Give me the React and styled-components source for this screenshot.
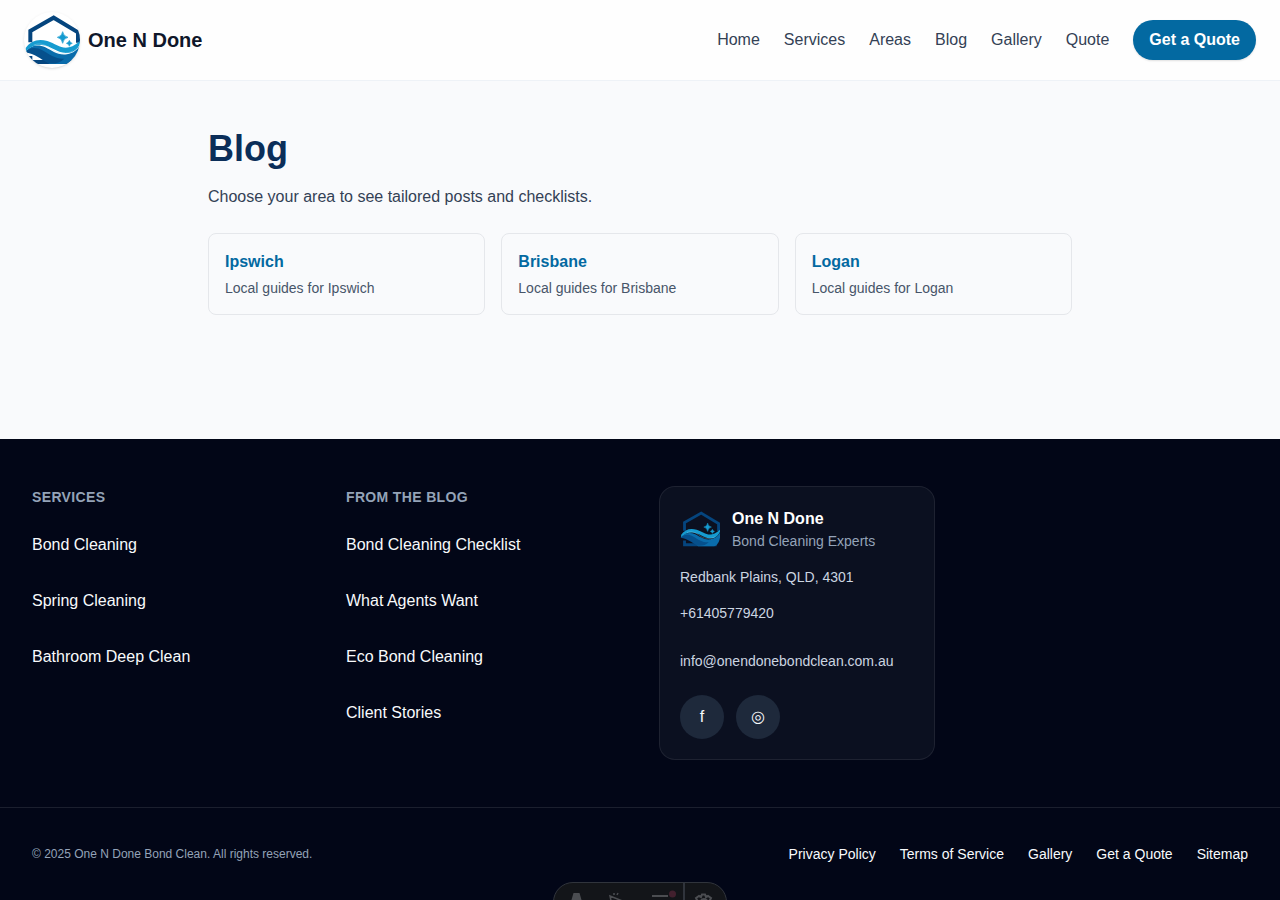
import React from "react";
import styled, { createGlobalStyle } from "styled-components";

const GlobalStyle = createGlobalStyle`
  *, *::before, *::after { box-sizing: border-box; }
  html, body { margin: 0; height: 900px; overflow: hidden; }
  body {
    background: #f9fafc;
    color: #334155;
    font-family: "Liberation Sans", Arial, sans-serif;
    font-size: 16px;
    line-height: 24px;
  }
  a { color: inherit; text-decoration: none; }
  h1, h2, p, ul { margin: 0; padding: 0; }
  ul { list-style: none; }
`;

const Page = styled.div`
  height: 900px;
  overflow: hidden;
  position: relative;
`;

const Header = styled.header`
  display: flex;
  align-items: center;
  justify-content: space-between;
  height: 81px;
  padding: 0 24px;
  background: #fefefe;
  border-bottom: 1px solid #eef2f7;
`;

const Brand = styled.a`
  display: flex;
  align-items: center;
  gap: 8px;
  color: #0f172a;
  font-size: 20px;
  font-weight: 700;
`;

const LogoDisc = styled.span`
  display: flex;
  width: 56px;
  height: 56px;
  border-radius: 50%;
  overflow: hidden;
  background: #fff;
  box-shadow: 0 1px 3px rgba(0, 0, 0, 0.1), 0 1px 2px -1px rgba(0, 0, 0, 0.1);
`;

const Nav = styled.nav`
  display: flex;
  align-items: center;
  gap: 24px;
`;

const QuoteButton = styled.a`
  padding: 8px 16px;
  border-radius: 999px;
  background: #0369a1;
  color: #fff;
  font-weight: 700;
  box-shadow: 0 1px 2px rgba(0, 0, 0, 0.12);
`;

const Main = styled.main`
  width: 864px;
  height: 358px;
  margin: 0 auto;
  padding-top: 48px;
`;

const Title = styled.h1`
  color: #0b2e59;
  font-size: 36px;
  line-height: 40px;
`;

const Intro = styled.p`
  margin: 16px 0 24px;
`;

const AreaGrid = styled.div`
  display: grid;
  grid-template-columns: repeat(3, 1fr);
  gap: 16px;
`;

const AreaCard = styled.a`
  height: 82px;
  padding: 16px;
  border: 1px solid #e5e7eb;
  border-radius: 8px;
`;

const AreaName = styled.h2`
  color: #0369a1;
  font-size: 16px;
  line-height: 24px;
`;

const AreaText = styled.p`
  margin-top: 4px;
  color: #475569;
  font-size: 14px;
  line-height: 20px;
`;

const Footer = styled.footer`
  height: 461px;
  background: #020617;
  color: #f8fafc;
`;

const FooterGrid = styled.div`
  display: grid;
  grid-template-columns: 276px 275px 276px 1fr;
  gap: 38px;
  height: 368px;
  padding: 47px 32px;
`;

const ColumnTitle = styled.h2`
  margin: 1px 0 16px;
  color: #94a3b8;
  font-size: 14px;
  line-height: 20px;
  letter-spacing: 0.35px;
  text-transform: uppercase;
`;

const LinkList = styled.ul`
  display: grid;
  gap: 12px;
`;

const LinkItem = styled.li`
  display: flex;
  align-items: center;
  height: 44px;
`;

const ContactCard = styled.section`
  height: 274px;
  padding: 20px;
  border: 1px solid rgba(255, 255, 255, 0.08);
  border-radius: 16px;
  background: #0b1020;
  color: #cbd5e1;
  font-size: 14px;
  line-height: 20px;
`;

const ContactBrand = styled.div`
  display: flex;
  align-items: center;
  gap: 12px;
`;

const ContactName = styled.p`
  color: #fff;
  font-size: 16px;
  font-weight: 700;
  line-height: 24px;
`;

const Tagline = styled.p`
  color: #94a3b8;
`;

const Address = styled.p`
  margin-top: 16px;
`;

const ContactLink = styled.a`
  display: flex;
  align-items: center;
  height: 44px;
  margin-top: 4px;
`;

const Socials = styled.div`
  display: flex;
  gap: 12px;
  margin-top: 12px;
`;

const SocialLink = styled.a`
  display: grid;
  place-items: center;
  width: 44px;
  height: 44px;
  border-radius: 50%;
  background: #1e293b;
  color: #f8fafc;
  font-size: 16px;
`;

const Legal = styled.div`
  display: flex;
  align-items: center;
  justify-content: space-between;
  height: 93px;
  padding: 0 32px;
  border-top: 1px solid rgba(255, 255, 255, 0.1);
  font-size: 14px;
`;

const Copyright = styled.span`
  color: #94a3b8;
  font-size: 12px;
`;

const Toolbar = styled.div`
  position: absolute;
  left: 553px;
  top: 882px;
  display: flex;
  width: 174px;
  height: 40px;
  border: 1px solid #30343c;
  border-radius: 20px;
  background: #131519;
  overflow: hidden;
`;

function Logo({ size }) {
  return (
    <svg width={size} height={size} viewBox="24 18 168 168" aria-hidden="true">
      <path d="M43 109V75L113 35L186 79V110M43 150V168H178" fill="none" stroke="#05457e" strokeWidth="12" />
      <path d="M30 136C44 118 66 114 88 124C108 134 125 149 153 145C172 142 186 130 193 116C195 145 184 172 168 174H100L70 145Z" fill="#0a6cab" />
      <path d="M26 139C39 124 60 122 79 133C102 146 116 159 145 158C132 170 115 175 98 172C72 160 59 143 26 139Z" fill="#06508c" />
      <path d="M29 126C44 104 67 97 94 105C120 113 136 130 159 124C176 119 186 110 195 102C191 127 172 142 149 141C122 140 107 120 77 117C57 115 43 123 28 137Z" fill="#169bd0" />
      <path d="M53 117C80 107 97 124 113 134C128 143 151 145 171 135" fill="none" stroke="#b9e4f5" strokeOpacity=".55" strokeWidth="2" />
      <path d="M140 77Q142 91 156 94Q142 97 140 112Q138 97 124 94Q138 91 140 77Z" fill="#159bd0" stroke="#159bd0" strokeWidth="2" />
      <path d="M160 103Q162 110 169 112Q162 114 160 121Q158 114 151 112Q158 110 160 103Z" fill="#159bd0" stroke="#159bd0" strokeWidth="1.5" />
    </svg>
  );
}

function ToolbarIcons() {
  return (
    <svg width="172" height="38" viewBox="554 883 172 38" fill="none" stroke="#4b4d51" strokeWidth="2" aria-hidden="true">
      <path d="M570 905L573.5 893H579.500L583 905H579L578 901H575L574 905Z" fill="#4b4d51" stroke="none" />
      <path d="M613 910L610 896L625 902L618 904L615 910M614 893V895M618 893L617 895" strokeWidth="1.5" />
      <path d="M652 896H668" />
      <circle cx="672.5" cy="894" r="3.5" fill="#42202e" stroke="none" />
      <path d="M684 883V921" stroke="#30343c" />
      <path d="M695.5 903L697 900L696 898L699 896L701 897L702 894.5H705L706 897L708 896L711 898L710 900L712 903M700 903Q701 899 704 899Q707 899 708 903" />
    </svg>
  );
}

const navigation = ["Home", "Services", "Areas", "Blog", "Gallery", "Quote"];
const areas = ["Ipswich", "Brisbane", "Logan"];
const columns = [
  { title: "Services", links: ["Bond Cleaning", "Spring Cleaning", "Bathroom Deep Clean"] },
  { title: "From the blog", links: ["Bond Cleaning Checklist", "What Agents Want", "Eco Bond Cleaning", "Client Stories"] },
];
const legal = ["Privacy Policy", "Terms of Service", "Gallery", "Get a Quote", "Sitemap"];

export default function App() {
  return (
    <Page>
      <GlobalStyle />
      <Header>
        <Brand href="#"><LogoDisc><Logo size={56} /></LogoDisc>One N Done</Brand>
        <Nav>
          {navigation.map((n) => <a href="#" key={n}>{n}</a>)}
          <QuoteButton href="#">Get a Quote</QuoteButton>
        </Nav>
      </Header>
      <Main>
        <Title>Blog</Title>
        <Intro>Choose your area to see tailored posts and checklists.</Intro>
        <AreaGrid>
          {areas.map((a) => (
            <AreaCard href="#" key={a}>
              <AreaName>{a}</AreaName>
              <AreaText>Local guides for {a}</AreaText>
            </AreaCard>
          ))}
        </AreaGrid>
      </Main>
      <Footer>
        <FooterGrid>
          {columns.map((c) => (
            <div key={c.title}>
              <ColumnTitle>{c.title}</ColumnTitle>
              <LinkList>
                {c.links.map((l) => <LinkItem key={l}><a href="#">{l}</a></LinkItem>)}
              </LinkList>
            </div>
          ))}
          <ContactCard>
            <ContactBrand>
              <Logo size={40} />
              <div>
                <ContactName>One N Done</ContactName>
                <Tagline>Bond Cleaning Experts</Tagline>
              </div>
            </ContactBrand>
            <Address>Redbank Plains, QLD, 4301</Address>
            <ContactLink href="#">+61405779420</ContactLink>
            <ContactLink href="#">info@onendonebondclean.com.au</ContactLink>
            <Socials>
              <SocialLink href="#">f</SocialLink>
              <SocialLink href="#">◎</SocialLink>
            </Socials>
          </ContactCard>
        </FooterGrid>
        <Legal>
          <Copyright>© 2025 One N Done Bond Clean. All rights reserved.</Copyright>
          <Nav>{legal.map((l) => <a href="#" key={l}>{l}</a>)}</Nav>
        </Legal>
      </Footer>
      <Toolbar><ToolbarIcons /></Toolbar>
    </Page>
  );
}
